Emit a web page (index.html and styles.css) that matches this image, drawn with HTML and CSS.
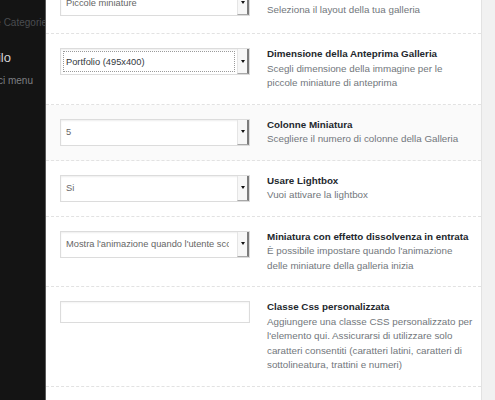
FILE: index.html
```html
<!DOCTYPE html>
<html lang="it">
<head>
    <meta charset="UTF-8">
    <meta name="viewport" content="width=device-width, initial-scale=1.0">
    <title>Impostazioni Galleria</title>
    <link rel="stylesheet" href="styles.css">
</head>
<body>
    <div class="admin-menu">
        <div class="menu-item menu-faded">Gestione Categorie</div>
        <div class="menu-item menu-current">Profilo</div>
        <div class="menu-item menu-sub">Gestisci menu</div>
    </div>

    <div class="settings-panel">
        <div class="setting-row first-row">
            <div class="setting-field">
                <div class="select"><span class="select-value">Piccole miniature</span><span class="select-arrow"></span></div>
            </div>
            <div class="setting-info">
                <div class="setting-title">Stile della griglia</div>
                <div class="setting-desc">Seleziona il layout della tua galleria</div>
            </div>
        </div>

        <div class="setting-row">
            <div class="setting-field">
                <div class="select focused"><span class="select-value">Portfolio (495x400)</span><span class="select-arrow"></span></div>
            </div>
            <div class="setting-info">
                <div class="setting-title">Dimensione della Anteprima Galleria</div>
                <div class="setting-desc">Scegli dimensione della immagine per le piccole miniature di anteprima</div>
            </div>
        </div>

        <div class="setting-row hovered">
            <div class="setting-field">
                <div class="select"><span class="select-value">5</span><span class="select-arrow"></span></div>
            </div>
            <div class="setting-info">
                <div class="setting-title">Colonne Miniatura</div>
                <div class="setting-desc">Scegliere il numero di colonne della Galleria</div>
            </div>
        </div>

        <div class="setting-row">
            <div class="setting-field">
                <div class="select"><span class="select-value">Si</span><span class="select-arrow"></span></div>
            </div>
            <div class="setting-info">
                <div class="setting-title">Usare Lightbox</div>
                <div class="setting-desc">Vuoi attivare la lightbox</div>
            </div>
        </div>

        <div class="setting-row">
            <div class="setting-field">
                <div class="select"><span class="select-value">Mostra l'animazione quando l'utente scorre la pagina</span><span class="select-arrow"></span></div>
            </div>
            <div class="setting-info">
                <div class="setting-title">Miniatura con effetto dissolvenza in entrata</div>
                <div class="setting-desc">È possibile impostare quando l'animazione delle miniature della galleria inizia</div>
            </div>
        </div>

        <div class="setting-row">
            <div class="setting-field">
                <input type="text" class="text-input">
            </div>
            <div class="setting-info">
                <div class="setting-title">Classe Css personalizzata</div>
                <div class="setting-desc">Aggiungere una classe CSS personalizzato per l'elemento qui. Assicurarsi di utilizzare solo caratteri consentiti (caratteri latini, caratteri di sottolineatura, trattini e numeri)</div>
            </div>
        </div>
    </div>

    <div class="page-edge"></div>
</body>
</html>
```

FILE: styles.css
```css
/* Gallery settings panel over the admin menu */
* {
    box-sizing: border-box;
}

html, body {
    margin: 0;
    padding: 0;
}

body {
    display: flex;
    height: 400px;
    overflow: hidden;
    font-family: 'Liberation Sans', Arial, sans-serif;
    background: #f1f1f1;
}

/* Admin sidebar (mostly hidden behind the panel) */
.admin-menu {
    flex: 0 0 45px;
    background: #141414;
    overflow: hidden;
}

.menu-item {
    display: flex;
    justify-content: flex-end;
    white-space: nowrap;
    font-size: 10px;
    line-height: 14px;
    color: #7d7f82;
}

.menu-faded {
    padding-top: 16px;
    margin-right: -2px;
    color: #4a4d50;
}

.menu-current {
    margin-top: 19px;
    padding-right: 34px;
    font-size: 13px;
    line-height: 18px;
    color: #d4d4d4;
}

.menu-sub {
    margin-top: 7px;
    padding-right: 12px;
}

/* Settings panel */
.settings-panel {
    flex: 0 0 437px;
    margin-top: -25px;
    background: #fff;
    border-left: 1px solid #5a5a5a;
    border-right: 1px solid #e2e2e2;
}

.page-edge {
    flex: 1;
    background: #f1f1f1;
}

.setting-row {
    display: flex;
    padding: 13px 7px 13px 14px;
    border-bottom: 1px dashed #e2e2e2;
}

.setting-row.first-row {
    padding-bottom: 16px;
}

.setting-row.hovered {
    background: #fafafa;
}

.setting-field {
    flex: 0 0 190px;
    min-width: 0;
    padding-top: 1px;
}

.setting-info {
    flex: 1;
    min-width: 0;
    margin-left: 17px;
    font-size: 9.8px;
    line-height: 14.5px;
}

.setting-title {
    font-weight: bold;
    color: #23282d;
}

.setting-desc {
    color: #72777c;
}

/* Fake select boxes */
.select {
    display: flex;
    width: 190px;
    height: 27px;
    background: #fff;
    border: 1px solid #dcdcdc;
    box-shadow: inset 0 1px 2px rgba(0, 0, 0, 0.07);
}

.select-value {
    flex: 1;
    display: flex;
    align-items: center;
    min-width: 0;
    margin-right: 8px;
    padding-left: 5px;
    font-size: 9.3px;
    color: #666;
    white-space: nowrap;
    overflow: hidden;
}

.select.focused .select-value {
    margin: 2px;
    padding-left: 2px;
    border: 1px dotted #9a9a9a;
    color: #32373c;
}

.select-arrow {
    flex: 0 0 12px;
    display: flex;
    align-items: center;
    justify-content: center;
    background: #f7f7f7;
    border-left: 1px solid #e5e5e5;
    border-right: 2px solid #7c7c7c;
    border-bottom: 1px solid #a8a8a8;
}

.select-arrow::after {
    content: "";
    border-left: 2.5px solid transparent;
    border-right: 2.5px solid transparent;
    border-top: 3px solid #111;
}

.text-input {
    display: block;
    width: 190px;
    height: 22px;
    margin: 0;
    padding: 0 5px;
    background: #fff;
    border: 1px solid #dcdcdc;
    border-radius: 0;
    box-shadow: inset 0 1px 2px rgba(0, 0, 0, 0.05);
    outline: none;
}
```
